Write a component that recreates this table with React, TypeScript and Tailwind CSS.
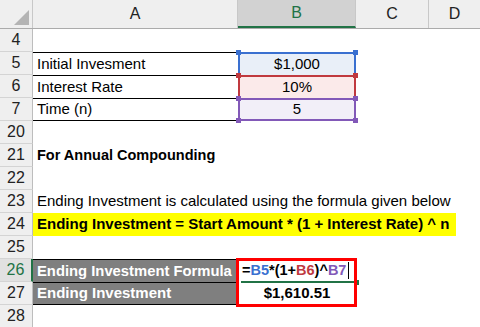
import React from 'react';

function Corner({ color, pos }: { color: string; pos: string }) {
  return <span className={`absolute h-[5px] w-[5px] ${color} ${pos}`} />;
}

function RowHead({ n }: { n: number }) {
  const active = n === 26;
  return (
    <div
      className={`flex h-full w-[33px] shrink-0 items-center justify-center border-b border-[#d4d4d4] text-[16px] ${
        active
          ? 'border-r-2 border-r-[#217346] bg-[#e1e1e1] text-[#217346]'
          : 'border-r border-r-[#bdbdbd] bg-[#efefef] text-[#222]'
      }`}
    >
      {n}
    </div>
  );
}

function Row({ n, children }: { n: number; children?: React.ReactNode }) {
  return (
    <div className="flex h-[23px]">
      <RowHead n={n} />
      {children}
    </div>
  );
}

export default function App() {
  return (
    <div
      className="relative h-[327px] w-[480px] overflow-hidden bg-white text-[15px] text-black"
      style={{ fontFamily: '"Liberation Sans", Arial, sans-serif' }}
    >
      {/* column headers */}
      <div className="flex h-[29px] border-b border-[#ababab] bg-[#efefef] text-[16px] text-[#222]">
        <div className="relative w-[33px] shrink-0 border-r border-[#c8c8c8]">
          <svg className="absolute bottom-[3px] right-[3px]" width="15" height="15" viewBox="0 0 15 15">
            <polygon points="15,0 15,15 0,15" fill="#b4b4b4" />
          </svg>
        </div>
        <div className="flex w-[205px] shrink-0 items-center justify-center border-r border-[#c8c8c8]">A</div>
        <div className="flex w-[118px] shrink-0 items-center justify-center border-b-2 border-r border-b-[#217346] border-r-[#c8c8c8] bg-[#d2d2d2] text-[#217346]">
          B
        </div>
        <div className="flex w-[73px] shrink-0 items-center justify-center border-r border-[#c8c8c8]">C</div>
        <div className="flex flex-1 items-center justify-center">D</div>
      </div>

      <Row n={4} />

      <Row n={5}>
        <div className="flex w-[205px] shrink-0 items-center border-t border-black pl-[4px]">Initial Invesment</div>
        <div className="relative flex w-[118px] shrink-0 items-center justify-center border-x-2 border-t-2 border-[#3a70d0] bg-[#e9eff8]">
          $1,000
          <Corner color="bg-[#3a70d0]" pos="-left-[4px] -top-[4px]" />
          <Corner color="bg-[#3a70d0]" pos="-right-[4px] -top-[4px]" />
        </div>
      </Row>

      <Row n={6}>
        <div className="flex w-[205px] shrink-0 items-center border-t border-black pl-[4px]">Interest Rate</div>
        <div className="relative flex w-[118px] shrink-0 items-center justify-center border-x-2 border-t-2 border-[#c0393f] bg-[#fbeaea]">
          10%
          <Corner color="bg-[#c0393f]" pos="-left-[4px] -top-[4px]" />
          <Corner color="bg-[#c0393f]" pos="-right-[4px] -top-[4px]" />
        </div>
      </Row>

      <Row n={7}>
        <div className="flex w-[205px] shrink-0 items-center border-y border-black pl-[4px]">Time (n)</div>
        <div className="relative flex w-[118px] shrink-0 items-center justify-center border-2 border-[#8259b8] bg-[#f2eff8]">
          5
          <Corner color="bg-[#8259b8]" pos="-left-[4px] -top-[4px]" />
          <Corner color="bg-[#8259b8]" pos="-right-[4px] -top-[4px]" />
          <Corner color="bg-[#8259b8]" pos="-left-[4px] -bottom-[4px]" />
          <Corner color="bg-[#8259b8]" pos="-right-[4px] -bottom-[4px]" />
        </div>
      </Row>

      <Row n={20} />

      <Row n={21}>
        <div className="flex items-center whitespace-nowrap pl-[4px] text-[14.5px] font-bold">For Annual Compounding</div>
      </Row>

      <Row n={22} />

      <Row n={23}>
        <div className="flex items-center whitespace-nowrap pl-[4px]">
          Ending Investment is calculated using the formula given below
        </div>
      </Row>

      <Row n={24}>
        <div className="flex w-[423px] shrink-0 items-center whitespace-nowrap bg-[#ffff00] pl-[4px] text-[15px] font-bold">
          Ending Investment = Start Amount * (1 + Interest Rate) ^ n
        </div>
      </Row>

      <Row n={25} />

      <Row n={26}>
        <div className="flex w-[205px] shrink-0 items-center whitespace-nowrap border-t border-black bg-[#7f7f7f] pl-[4px] text-[14.8px] font-bold text-white">
          Ending Investment Formula
        </div>
        <div className="relative flex w-[118px] shrink-0 items-center whitespace-nowrap pl-[4px] text-[14.5px] font-bold">
          <span>=</span>
          <span className="text-[#3a70d0]">B5</span>
          <span>*(1+</span>
          <span className="text-[#c0393f]">B6</span>
          <span>)^</span>
          <span className="text-[#8259b8]">B7</span>
          <span className="ml-[2px] h-[17px] w-px bg-black" />
          <span className="absolute bottom-[-1px] left-[3px] right-0 h-[2px] bg-[#217346]" />
          <span className="absolute -bottom-[3px] -right-[3px] h-[5px] w-[5px] bg-[#217346]" />
        </div>
      </Row>

      <Row n={27}>
        <div className="flex w-[205px] shrink-0 items-center whitespace-nowrap border-y border-black bg-[#7f7f7f] pl-[4px] text-[15px] font-bold text-white">
          Ending Investment
        </div>
        <div className="flex w-[118px] shrink-0 items-center justify-center text-[15px] font-bold">$1,610.51</div>
      </Row>

      <Row n={28} />

      {/* highlighted output range */}
      <div className="pointer-events-none absolute left-[236px] top-[258px] h-[49px] w-[121px] border-[3px] border-[#ff0000]" />
    </div>
  );
}
